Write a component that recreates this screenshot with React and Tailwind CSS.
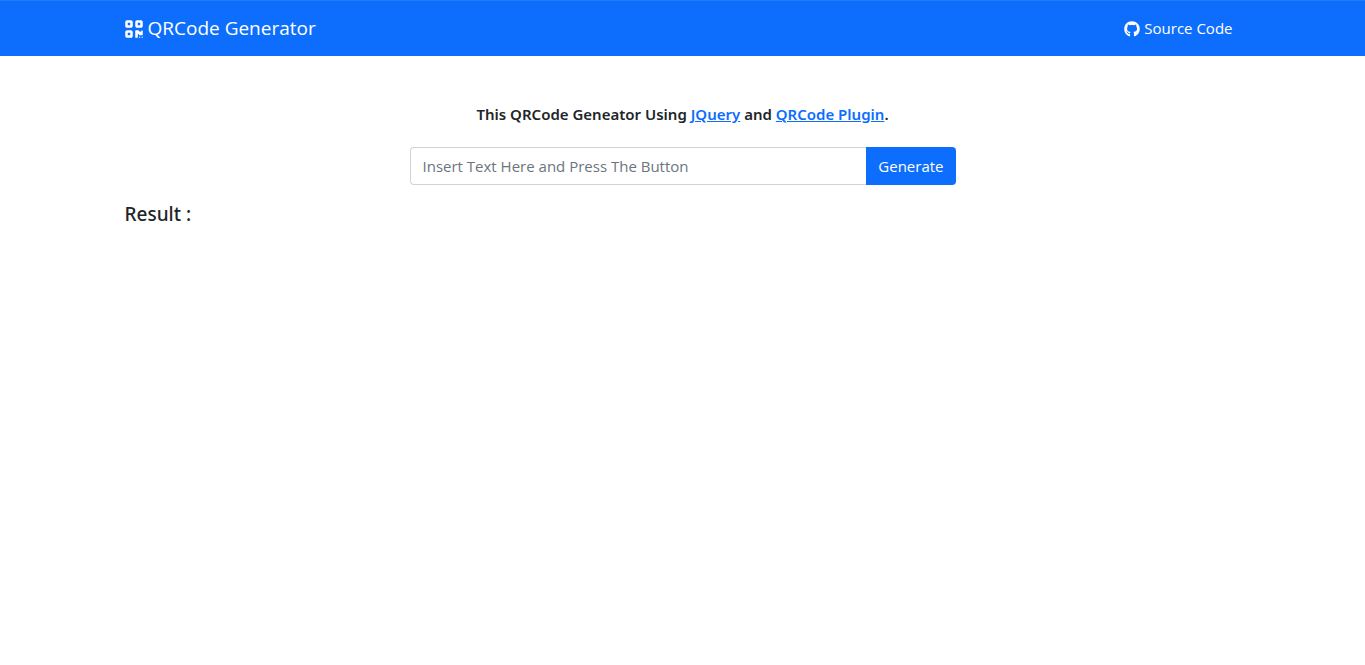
import { FaGithub, FaQrcode } from "react-icons/fa6";

export default function App() {
  return (
    <div className="min-h-screen bg-white font-['Open_Sans','Noto_Sans',sans-serif] text-[15px] text-[#212529]">
      <header className="border-t border-[#1f7aff] bg-[#0d6efd] text-white">
        <nav className="mx-auto flex h-[55px] max-w-[1140px] items-center justify-between px-3">
          <a href="#" className="flex items-center gap-[5px] text-[19px]">
            <FaQrcode className="h-5 w-[18px]" aria-hidden="true" />
            QRCode Generator
          </a>
          <a href="#" className="flex items-center gap-1 px-2">
            <FaGithub className="size-4" aria-hidden="true" />
            Source Code
          </a>
        </nav>
      </header>
      <main className="mx-auto max-w-[1140px] pt-12">
        <h6 className="px-3 text-center font-['Noto_Sans',sans-serif] leading-5 font-semibold">
          This QRCode Geneator Using{" "}
          <a href="#" className="text-[#0d6efd] underline">JQuery</a> and{" "}
          <a href="#" className="text-[#0d6efd] underline">QRCode Plugin</a>.
        </h6>
        <div className="mx-auto mt-[23px] w-1/2 px-3">
          <form className="flex h-[38px]" onSubmit={(e) => e.preventDefault()}>
            <input
              type="text"
              aria-label="Text"
              placeholder="Insert Text Here and Press The Button"
              className="min-w-0 grow rounded-l border border-r-0 border-[#ced4da] px-3 placeholder:text-[#6c757d]"
            />
            <button type="submit" className="rounded-r bg-[#0d6efd] px-3 text-white">Generate</button>
          </form>
        </div>
        <h5 className="mt-[17px] px-3 font-['Noto_Sans',sans-serif] text-[19px] leading-6 font-medium">Result :</h5>
      </main>
    </div>
  );
}
